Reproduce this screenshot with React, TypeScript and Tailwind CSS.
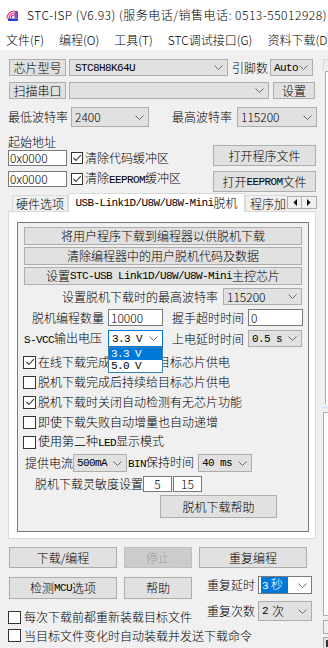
import React from "react";

function M({ children }: { children: React.ReactNode }) {
  return <span className="font-['Liberation_Mono',monospace] text-[11px] tracking-[-0.6px] font-normal">{children}</span>;
}

function Chevron() {
  return (
    <svg width="9" height="5" viewBox="0 0 9 5" className="shrink-0">
      <polyline points="0.5,0.5 4.5,4.5 8.5,0.5" fill="none" stroke="#6b6b6b" strokeWidth="1" />
    </svg>
  );
}

function Btn({ className = "", children, disabled }: { className?: string; children: React.ReactNode; disabled?: boolean }) {
  return (
    <div
      className={`flex items-center justify-center whitespace-nowrap border shrink-0 ${
        disabled ? "border-[#bfbfbf] bg-[#cccccc] text-[#a0a0a0]" : "border-[#adadad] bg-[#e1e1e1] text-black"
      } ${className}`}
    >
      {children}
    </div>
  );
}

function Combo({ className = "", children, white }: { className?: string; children?: React.ReactNode; white?: boolean }) {
  return (
    <div
      className={`flex items-center justify-between whitespace-nowrap border shrink-0 pl-[3px] pr-[4px] ${
        white ? "border-[#7a7a7a] bg-white" : "border-[#adadad] bg-[#e1e1e1]"
      } ${className}`}
    >
      <span className="flex items-center">{children}</span>
      <Chevron />
    </div>
  );
}

function Input({ className = "", children }: { className?: string; children?: React.ReactNode }) {
  return (
    <div className={`flex items-center whitespace-nowrap border border-[#7a7a7a] bg-white shrink-0 ${className}`}>{children}</div>
  );
}

function Check({ checked, small }: { checked?: boolean; small?: boolean }) {
  return (
    <div
      className={`border border-[#333333] bg-white flex items-center justify-center shrink-0 ${
        small ? "w-[12px] h-[12px]" : "w-[13px] h-[13px]"
      }`}
    >
      {checked && (
        <svg width="10" height="10" viewBox="0 0 10 10">
          <path d="M1.5 5 L4 7.5 L8.8 2.2" stroke="#333333" strokeWidth="1.1" fill="none" />
        </svg>
      )}
    </div>
  );
}

function Logo() {
  return (
    <svg width="12" height="11" viewBox="0 0 12 11" className="shrink-0">
      <path d="M1 8.5 A7.5 7.5 0 0 1 8.5 1" stroke="#e5256c" strokeWidth="1.2" fill="none" />
      <path d="M3 8.5 A5.5 5.5 0 0 1 8.5 3" stroke="#e5256c" strokeWidth="1.2" fill="none" />
      <path d="M5 8.5 A3.5 3.5 0 0 1 8.5 5" stroke="#e5256c" strokeWidth="1.2" fill="none" />
      <rect x="2" y="8.5" width="10" height="2.5" fill="#2d3fd2" />
      <rect x="8.5" y="1" width="3.5" height="7.5" fill="#8a3fc6" />
    </svg>
  );
}

function Tri({ left }: { left?: boolean }) {
  return (
    <svg width="4" height="7" viewBox="0 0 4 7">
      {left ? <polygon points="4,0 4,7 0.5,3.5" fill="#000" /> : <polygon points="0,0 0,7 3.5,3.5" fill="#000" />}
    </svg>
  );
}

function CheckRow({ checked, children }: { checked?: boolean; children: React.ReactNode }) {
  return (
    <div className="h-[20px] flex items-center -ml-[1px] whitespace-nowrap">
      <Check checked={checked} />
      <span className="ml-[2px]">{children}</span>
    </div>
  );
}

export default function App() {
  return (
    <div className="w-[328px] h-[648px] overflow-hidden bg-[#f0f0f0] text-[12px] leading-[14px] text-black font-light font-['Microsoft_YaHei_UI','Noto_Sans_CJK_SC',sans-serif]">
      {/* Title bar */}
      <div className="h-[30px] bg-white flex items-center pl-[6px] whitespace-nowrap">
        <Logo />
        <span className="ml-[9px] tracking-[0.5px]">STC-ISP (V6.93) (服务电话/销售电话: 0513-55012928)</span>
      </div>
      {/* Menu bar */}
      <div className="h-[20px] bg-white flex items-center pl-[6px] gap-[15px] whitespace-nowrap">
        <span>文件(F)</span>
        <span>编程(O)</span>
        <span>工具(T)</span>
        <span>STC调试接口(G)</span>
        <span>资料下载(D)</span>
      </div>

      <div className="flex">
        {/* Left column */}
        <div className="w-[322px] shrink-0 pl-[8px] pt-[9px]">
          {/* Row 1 */}
          <div className="flex items-center h-[17px]">
            <Btn className="ml-[1px] w-[57px] h-[17px]">芯片型号</Btn>
            <Combo className="ml-[3px] w-[159px] h-[17px] pl-[5px]">
              <M>STC8H8K64U</M>
            </Combo>
            <span className="ml-[4px] w-[36px] whitespace-nowrap">引脚数</span>
            <Combo className="ml-[2px] w-[43px] h-[17px]">
              <M>Auto</M>
            </Combo>
          </div>
          {/* Row 2 */}
          <div className="flex items-center h-[17px] mt-[6px]">
            <Btn className="ml-[1px] w-[57px] h-[17px]">扫描串口</Btn>
            <Combo className="ml-[3px] w-[200px] h-[17px]" />
            <Btn className="ml-[4px] w-[42px] h-[17px]">设置</Btn>
          </div>
          {/* Row 3 */}
          <div className="flex items-center h-[20px] mt-[8px] whitespace-nowrap">
            <span className="w-[62px]">最低波特率</span>
            <Combo className="ml-[1px] w-[78px] h-[20px]">2400</Combo>
            <span className="ml-[23px]">最高波特率</span>
            <Combo className="ml-[5px] w-[80px] h-[20px]">115200</Combo>
          </div>
          {/* Address + files */}
          <div className="flex">
            <div className="w-[205px] flex flex-col shrink-0">
              <div className="mt-[8px] h-[14px] flex items-center">起始地址</div>
              <div className="mt-[1px] h-[16px] flex items-center whitespace-nowrap">
                <Input className="w-[59px] h-[16px] pl-[1px]">0x0000</Input>
                <div className="ml-[4px]">
                  <Check checked small />
                </div>
                <span className="ml-[2px]">清除代码缓冲区</span>
              </div>
              <div className="mt-[5px] h-[16px] flex items-center whitespace-nowrap">
                <Input className="w-[59px] h-[16px] pl-[1px]">0x0000</Input>
                <div className="ml-[4px]">
                  <Check checked small />
                </div>
                <span className="ml-[2px]">
                  清除<M>EEPROM</M>缓冲区
                </span>
              </div>
            </div>
            <div className="flex flex-col pt-[18px]">
              <Btn className="w-[103px] h-[21px]">打开程序文件</Btn>
              <Btn className="mt-[5px] w-[103px] h-[21px]">
                打开<M>EEPROM</M>文件
              </Btn>
            </div>
          </div>

          {/* Tabs */}
          <div className="mt-[1px] h-[18px] flex items-end pl-[4px] relative z-10 whitespace-nowrap">
            <div className="w-[56px] h-[16px] border border-b-0 border-[#d9d9d9] bg-[#f0f0f0] flex items-center justify-center">
              硬件选项
            </div>
            <div className="w-[177px] h-[19px] -mb-[1px] border border-b-0 border-[#d9d9d9] bg-white flex items-center justify-center">
              <M>USB-Link1D/U8W/U8W-Mini</M>脱机
            </div>
            <div className="w-[42px] h-[16px] border border-b-0 border-r-0 border-[#d9d9d9] bg-[#f0f0f0] flex items-center pl-[4px] overflow-hidden">
              程序加载
            </div>
            <div className="self-start mt-[3px] flex">
              <div className="w-[15px] h-[13px] border border-[#adadad] bg-[#f0f0f0] flex items-center justify-center">
                <Tri left />
              </div>
              <div className="w-[15px] h-[13px] border border-l-0 border-[#adadad] bg-[#f0f0f0] flex items-center justify-center">
                <Tri />
              </div>
            </div>
          </div>

          {/* Tab panel */}
          <div className="w-[308px] h-[328px] border border-[#d9d9d9] bg-white pt-[10px] pl-[8px]">
            <div className="w-[292px] h-[310px] border border-[#7a7a7a] bg-[#f0f0f0] relative pl-[6px] pt-[4px] whitespace-nowrap">
              <Btn className="w-[278px] h-[18px]">将用户程序下载到编程器以供脱机下载</Btn>
              <Btn className="mt-[2px] w-[278px] h-[18px]">清除编程器中的用户脱机代码及数据</Btn>
              <Btn className="mt-[2px] w-[278px] h-[18px]">
                设置<M>STC-USB Link1D/U8W/U8W-Mini</M>主控芯片
              </Btn>
              <div className="mt-[3px] w-[278px] h-[17px] flex items-center justify-end">
                <span>设置脱机下载时的最高波特率</span>
                <Combo className="ml-[5px] w-[79px] h-[17px]">115200</Combo>
              </div>
              <div className="mt-[4px] h-[17px] flex items-center">
                <span className="ml-[8px] w-[76px]">脱机编程数量</span>
                <Input className="w-[55px] h-[17px] pl-[2px]">10000</Input>
                <span className="ml-[9px] w-[76px]">握手超时时间</span>
                <Input className="w-[55px] h-[17px] pl-[2px]">0</Input>
              </div>
              <div className="mt-[4px] h-[17px] flex items-center">
                <span className="w-[84px]">
                  <M>S-VCC</M>输出电压
                </span>
                <div className="w-[55px] h-[17px] border border-[#0078d7] bg-white flex items-center justify-between pl-[3px] pr-[4px] shrink-0">
                  <M>3.3 V</M>
                  <Chevron />
                </div>
                <span className="ml-[9px] w-[76px]">上电延时时间</span>
                <Combo className="w-[54px] h-[17px]">
                  <M>0.5 s</M>
                </Combo>
              </div>
              <div className="mt-[5px]">
                <CheckRow checked>在线下载完成后持续给目标芯片供电</CheckRow>
                <CheckRow>脱机下载完成后持续给目标芯片供电</CheckRow>
                <CheckRow checked>脱机下载时关闭自动检测有无芯片功能</CheckRow>
                <CheckRow>即使下载失败自动增量也自动递增</CheckRow>
                <CheckRow>
                  使用第二种<M>LED</M>显示模式
                </CheckRow>
              </div>
              <div className="mt-[2px] h-[18px] flex items-center">
                <span className="ml-[1px] w-[48px]">提供电流</span>
                <Combo className="w-[54px] h-[18px] pl-[2px]">
                  <M>500mA</M>
                </Combo>
                <span className="ml-[1px] w-[70px]">
                  <M>BIN</M>保持时间
                </span>
                <Combo className="w-[54px] h-[18px] pl-[2px]">
                  <M>40 ms</M>
                </Combo>
              </div>
              <div className="mt-[4px] h-[16px] flex items-center">
                <span className="ml-[11px] w-[108px]">脱机下载灵敏度设置</span>
                <Input className="w-[29px] h-[16px] justify-center">5</Input>
                <Input className="ml-[1px] w-[29px] h-[16px] justify-center">15</Input>
              </div>
              <Btn className="mt-[3px] ml-[136px] w-[117px] h-[23px]">脱机下载帮助</Btn>

              {/* Open dropdown list */}
              <div className="absolute left-[90px] top-[124px] w-[55px] h-[26px] border border-[#3c7fb1] bg-white z-20 flex flex-col">
                <div className="h-[12px] bg-[#0078d7] text-white flex items-center pl-[2px]">
                  <M>3.3 V</M>
                </div>
                <div className="h-[12px] flex items-center pl-[2px]">
                  <M>5.0 V</M>
                </div>
              </div>
            </div>
          </div>

          {/* Bottom buttons */}
          <div className="mt-[8px] h-[21px] flex items-center">
            <Btn className="ml-[1px] w-[108px] h-[21px]">下载/编程</Btn>
            <Btn className="ml-[7px] w-[68px] h-[21px]" disabled>
              停止
            </Btn>
            <Btn className="ml-[7px] w-[108px] h-[21px]">重复编程</Btn>
          </div>
          <div className="flex">
            <div className="w-[199px] shrink-0">
              <div className="mt-[9px] h-[22px] flex items-center">
                <Btn className="ml-[1px] w-[108px] h-[22px]">
                  检测<M>MCU</M>选项
                </Btn>
                <Btn className="ml-[7px] w-[68px] h-[22px]">帮助</Btn>
              </div>
              <div className="mt-[9px] h-[18px] flex items-center whitespace-nowrap">
                <Check />
                <span className="ml-[3px]">每次下载前都重新装载目标文件</span>
              </div>
              <div className="h-[19px] flex items-center whitespace-nowrap">
                <Check />
                <span className="ml-[3px]">当目标文件变化时自动装载并发送下载命令</span>
              </div>
            </div>
            <div className="flex flex-col">
              <div className="mt-[8px] h-[18px] flex items-center whitespace-nowrap">
                <span>重复延时</span>
                <div className="ml-[3px] w-[54px] h-[18px] border border-[#7a7a7a] bg-white flex items-center justify-between pl-[2px] pr-[4px]">
                  <span className="bg-[#0078d7] text-white px-[1px] w-[27px]">
                    <M>3</M> 秒
                  </span>
                  <Chevron />
                </div>
              </div>
              <div className="mt-[7px] h-[20px] flex items-center whitespace-nowrap">
                <span>重复次数</span>
                <Combo className="ml-[3px] w-[54px] h-[20px]">
                  <M>2</M>
                  <span className="ml-[4px]">次</span>
                </Combo>
              </div>
            </div>
          </div>
        </div>

        {/* Right column (cut off) */}
        <div className="flex-1 flex flex-col pt-[9px]">
          <div className="h-[12px] ml-[1px] border-l border-t border-[#d9d9d9]" />
          <div className="h-[333px] ml-[3px] border-l border-t border-[#adadad] bg-white" />
          <div className="mt-[3px] h-[1px] bg-[#cfe3f5]" />
          <div className="mt-[4px] h-[204px] ml-[1px] border-l border-t border-b border-[#adadad] bg-white" />
          <div className="mt-[4px] h-[14px] ml-[1px] border border-[#adadad] bg-[#f0f0f0]" />
          <div className="mt-[3px] h-[12px] ml-[1px] border border-[#adadad] bg-[#e1e1e1] flex items-center pl-[2px]">
            <div className="w-[2px] h-[7px] bg-[#333]" />
          </div>
        </div>
      </div>
    </div>
  );
}
